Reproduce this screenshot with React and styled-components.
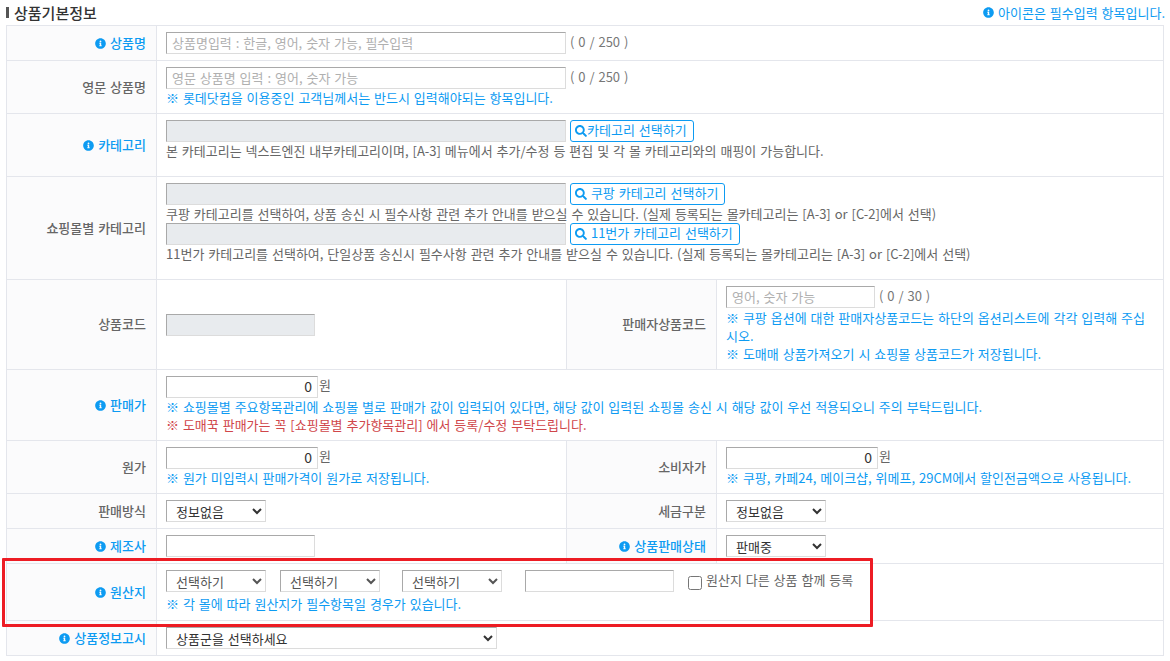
import React from "react";
import styled, { createGlobalStyle } from "styled-components";
import { FaInfoCircle, FaSearch } from "react-icons/fa";

const GlobalStyle = createGlobalStyle`
  html, body {
    margin: 0;
    padding: 0;
    background: #fff;
  }
  body {
    font-family: "Noto Sans CJK KR", "Noto Sans", "Liberation Sans", sans-serif;
    font-size: 13px;
    word-spacing: 1px;
    color: #666;
  }
`;

const Page = styled.div`
  position: relative;
  width: 1170px;
  height: 661px;
  overflow: hidden;
  padding: 0 5px 0 6px;
  box-sizing: border-box;
`;

const TitleBar = styled.div`
  display: flex;
  align-items: center;
  justify-content: space-between;
  height: 25px;
`;

const Title = styled.h3`
  margin: 0;
  font-size: 15px;
  font-weight: 500;
  color: #333;
  line-height: 25px;
  display: flex;
  align-items: center;
  &::before {
    content: "";
    width: 3px;
    height: 11px;
    background: #555;
    margin-right: 5px;
  }
`;

const Legend = styled.div`
  color: #0d9bf2;
  display: flex;
  align-items: center;
  gap: 4px;
`;

const Table = styled.table`
  border-collapse: collapse;
  table-layout: fixed;
  width: 1158px;
  border: 1px solid #e4e6ec;
`;

const Row = styled.tr`
  height: ${(p) => p.$h}px;
`;

const Th = styled.th`
  background: #fbfbfc;
  border: 1px solid #e4e6ec;
  padding: 0 10px 2px 0;
  text-align: right;
  vertical-align: middle;
  font-weight: 500;
  color: ${(p) => (p.$required ? "#0d9bf2" : "#666")};
  svg {
    vertical-align: -1px;
    margin-right: 4px;
  }
`;

const Td = styled.td`
  border: 1px solid #e4e6ec;
  padding: ${(p) => (p.$middle ? "0 9px" : "6px 9px 0")};
  vertical-align: ${(p) => (p.$middle ? "middle" : "top")};
  line-height: 18px;
`;

const Line = styled.div`
  display: flex;
  align-items: center;
  height: 22px;
`;

const TextInput = styled.input`
  box-sizing: border-box;
  display: block;
  height: 22px;
  width: ${(p) => p.$w}px;
  margin: 0;
  padding: 0 5px 2px;
  border: 1px solid;
  border-color: #a9a9a9 #dcdcdc #dcdcdc #a9a9a9;
  border-radius: 0;
  outline: none;
  font-family: inherit;
  font-size: ${(p) => (p.$right ? 14 : 13)}px;
  word-spacing: 1px;
  color: #333;
  background: ${(p) => (p.disabled ? "#e8ebee" : "#fff")};
  text-align: ${(p) => (p.$right ? "right" : "left")};
  &::placeholder {
    color: #b0b0b0;
    opacity: 1;
  }
`;

const Count = styled.span`
  margin: 0 0 2px 4px;
  color: #777;
`;

const Won = styled.span`
  margin-left: 1px;
  align-self: flex-start;
  line-height: 17px;
  color: #666;
`;

const SearchButton = styled.button`
  box-sizing: border-box;
  height: 22px;
  margin: 0 0 0 4px;
  padding: 0 6px 2px 4px;
  background: #fff;
  border: 1px solid #0d9bf2;
  border-radius: 3px;
  color: #0d9bf2;
  font-family: inherit;
  font-size: 13px;
  word-spacing: 1px;
  line-height: 18px;
  white-space: nowrap;
  svg {
    vertical-align: -2px;
  }
`;

const Help = styled.div`
  color: ${(p) => (p.$red ? "#d0464a" : p.$plain ? "#666" : "#0d9bf2")};
  line-height: 18px;
  margin-top: ${(p) => p.$top || 0}px;
`;

const Select = styled.select`
  box-sizing: border-box;
  height: 22px;
  width: ${(p) => p.$w}px;
  margin: 0 ${(p) => p.$gap || 0}px 0 0;
  padding: 0 0 2px 5px;
  border: 1px solid;
  border-color: #a9a9a9 #dcdcdc #dcdcdc #a9a9a9;
  border-radius: 0;
  background: #fff;
  font-family: inherit;
  font-size: 13px;
  word-spacing: 1px;
  color: ${(p) => (p.$muted ? "#555" : "#333")};
  outline: none;
`;

const Check = styled.input`
  width: 14px;
  height: 14px;
  margin: 4px 4px 0 14px;
`;

const CheckLabel = styled.span`
  margin-bottom: 3px;
`;

const Highlight = styled.div`
  position: absolute;
  left: 2px;
  top: 558px;
  width: 871px;
  height: 69px;
  box-sizing: border-box;
  border: 3px solid #ed1c24;
  border-radius: 1px;
  pointer-events: none;
`;

const Label = ({ required, children }) => (
  <>
    {required && <FaInfoCircle size={11} />}
    {children}
  </>
);

export default function App() {
  return (
    <Page>
      <GlobalStyle />
      <TitleBar>
        <Title>상품기본정보</Title>
        <Legend>
          <FaInfoCircle size={11} />
          아이콘은 필수입력 항목입니다.
        </Legend>
      </TitleBar>
      <Table>
        <colgroup>
          <col style={{ width: 150 }} />
          <col style={{ width: 410 }} />
          <col style={{ width: 150 }} />
          <col />
        </colgroup>
        <tbody>
          <Row $h={35}>
            <Th $required><Label required>상품명</Label></Th>
            <Td colSpan={3}>
              <Line>
                <TextInput $w={400} placeholder="상품명입력 : 한글, 영어, 숫자 가능, 필수입력" />
                <Count>( 0 / 250 )</Count>
              </Line>
            </Td>
          </Row>
          <Row $h={53}>
            <Th>영문 상품명</Th>
            <Td colSpan={3}>
              <Line>
                <TextInput $w={400} placeholder="영문 상품명 입력 : 영어, 숫자 가능" />
                <Count>( 0 / 250 )</Count>
              </Line>
              <Help>※ 롯데닷컴을 이용중인 고객님께서는 반드시 입력해야되는 항목입니다.</Help>
            </Td>
          </Row>
          <Row $h={63}>
            <Th $required><Label required>카테고리</Label></Th>
            <Td colSpan={3}>
              <Line>
                <TextInput $w={400} disabled />
                <SearchButton><FaSearch size={12} />카테고리 선택하기</SearchButton>
              </Line>
              <Help $plain>본 카테고리는 넥스트엔진 내부카테고리이며, [A-3] 메뉴에서 추가/수정 등 편집 및 각 몰 카테고리와의 매핑이 가능합니다.</Help>
            </Td>
          </Row>
          <Row $h={103}>
            <Th>쇼핑몰별 카테고리</Th>
            <Td colSpan={3}>
              <Line>
                <TextInput $w={400} disabled />
                <SearchButton><FaSearch size={12} /> 쿠팡 카테고리 선택하기</SearchButton>
              </Line>
              <Help $plain>쿠팡 카테고리를 선택하여, 상품 송신 시 필수사항 관련 추가 안내를 받으실 수 있습니다. (실제 등록되는 몰카테고리는 [A-3] or [C-2]에서 선택)</Help>
              <Line>
                <TextInput $w={400} disabled />
                <SearchButton><FaSearch size={12} /> 11번가 카테고리 선택하기</SearchButton>
              </Line>
              <Help $plain>11번가 카테고리를 선택하여, 단일상품 송신시 필수사항 관련 추가 안내를 받으실 수 있습니다. (실제 등록되는 몰카테고리는 [A-3] or [C-2]에서 선택)</Help>
            </Td>
          </Row>
          <Row $h={90}>
            <Th>상품코드</Th>
            <Td $middle><TextInput $w={149} disabled /></Td>
            <Th>판매자상품코드</Th>
            <Td>
              <Line>
                <TextInput $w={149} placeholder="영어, 숫자 가능" />
                <Count>( 0 / 30 )</Count>
              </Line>
              <Help $top={1}>※ 쿠팡 옵션에 대한 판매자상품코드는 하단의 옵션리스트에 각각 입력해 주십시오.</Help>
              <Help>※ 도매매 상품가져오기 시 쇼핑몰 상품코드가 저장됩니다.</Help>
            </Td>
          </Row>
          <Row $h={71}>
            <Th $required><Label required>판매가</Label></Th>
            <Td colSpan={3}>
              <Line>
                <TextInput $w={152} $right defaultValue="0" />
                <Won>원</Won>
              </Line>
              <Help>※ 쇼핑몰별 주요항목관리에 쇼핑몰 별로 판매가 값이 입력되어 있다면, 해당 값이 입력된 쇼핑몰 송신 시 해당 값이 우선 적용되오니 주의 부탁드립니다.</Help>
              <Help $red>※ 도매꾹 판매가는 꼭 [쇼핑몰별 추가항목관리] 에서 등록/수정 부탁드립니다.</Help>
            </Td>
          </Row>
          <Row $h={53}>
            <Th>원가</Th>
            <Td>
              <Line>
                <TextInput $w={152} $right defaultValue="0" />
                <Won>원</Won>
              </Line>
              <Help>※ 원가 미입력시 판매가격이 원가로 저장됩니다.</Help>
            </Td>
            <Th>소비자가</Th>
            <Td>
              <Line>
                <TextInput $w={152} $right defaultValue="0" />
                <Won>원</Won>
              </Line>
              <Help>※ 쿠팡, 카페24, 메이크샵, 위메프, 29CM에서 할인전금액으로 사용됩니다.</Help>
            </Td>
          </Row>
          <Row $h={35}>
            <Th>판매방식</Th>
            <Td><Line><Select $w={100}><option>정보없음</option></Select></Line></Td>
            <Th>세금구분</Th>
            <Td><Line><Select $w={100}><option>정보없음</option></Select></Line></Td>
          </Row>
          <Row $h={35}>
            <Th $required><Label required>제조사</Label></Th>
            <Td><Line><TextInput $w={149} /></Line></Td>
            <Th $required><Label required>상품판매상태</Label></Th>
            <Td><Line><Select $w={100}><option>판매중</option></Select></Line></Td>
          </Row>
          <Row $h={57}>
            <Th $required><Label required>원산지</Label></Th>
            <Td colSpan={3}>
              <Line>
                <Select $w={100} $gap={14} $muted><option>선택하기</option></Select>
                <Select $w={100} $gap={22} $muted><option>선택하기</option></Select>
                <Select $w={100} $gap={23} $muted><option>선택하기</option></Select>
                <TextInput $w={149} />
                <Check type="checkbox" />
                <CheckLabel>원산지 다른 상품 함께 등록</CheckLabel>
              </Line>
              <Help $top={3}>※ 각 몰에 따라 원산지가 필수항목일 경우가 있습니다.</Help>
            </Td>
          </Row>
          <Row $h={35}>
            <Th $required><Label required>상품정보고시</Label></Th>
            <Td colSpan={3}>
              <Line><Select $w={331}><option>상품군을 선택하세요</option></Select></Line>
            </Td>
          </Row>
        </tbody>
      </Table>
      <Highlight />
    </Page>
  );
}
